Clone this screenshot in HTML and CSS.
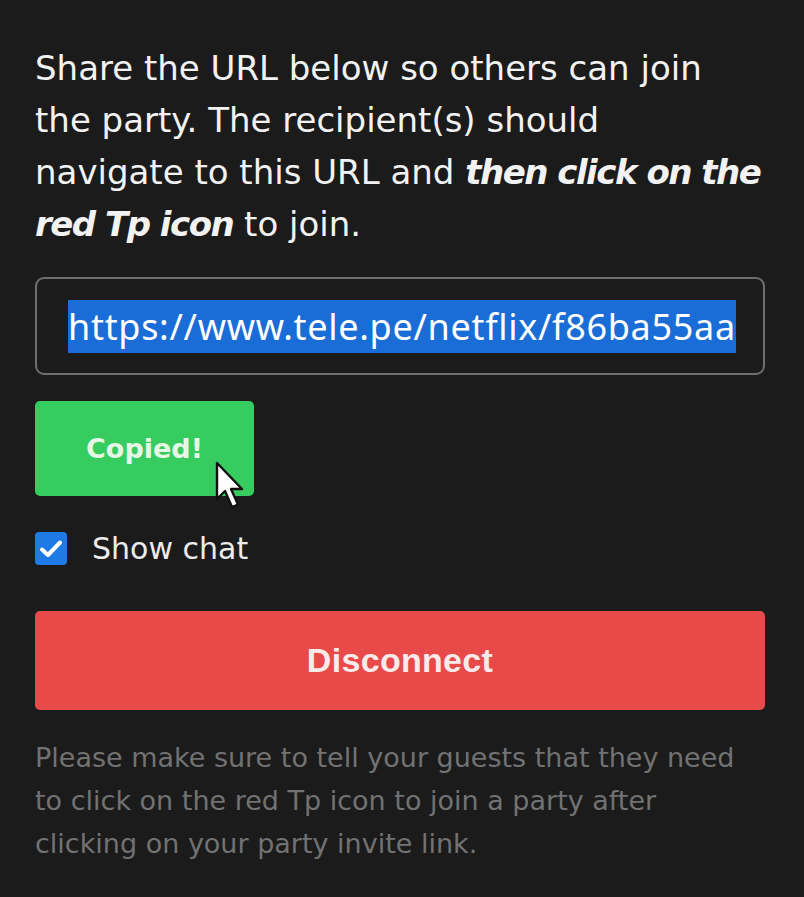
FILE: index.html
```html
<!DOCTYPE html>
<html lang="en">
<head>
    <meta charset="UTF-8">
    <title>Share Party</title>
    <link rel="stylesheet" href="styles.css">
</head>
<body>
    <div class="panel">
        <p class="intro">Share the URL below so others can join<br>the party. The recipient(s) should<br>navigate to this URL and <b><i>then click on the<br>red Tp icon</i></b> to join.</p>

        <div class="url-box">
            <span class="url-text">https://www.tele.pe/netflix/f86ba55aa</span>
        </div>

        <div class="copy-row">
            <button class="btn-copy">Copied!</button>
            <svg class="cursor" width="30" height="52" viewBox="0 0 15 26">
                <path d="M1 1 L1 19 L5 15 L8.5 23 L11.5 21.8 L8 14 L13.5 14 Z" fill="#fff" stroke="#111" stroke-width="1.2" stroke-linejoin="round"/>
            </svg>
        </div>

        <label class="chat-toggle">
            <span class="checkbox">
                <svg width="24" height="20" viewBox="0 0 24 20"><path d="M3 10.5 L9 16 L21 3.5" fill="none" stroke="#fff" stroke-width="4" stroke-linecap="round" stroke-linejoin="round"/></svg>
            </span>
            Show chat
        </label>

        <button class="btn-disconnect">Disconnect</button>

        <p class="note">Please make sure to tell your guests that they need<br>to click on the red Tp icon to join a party after<br>clicking on your party invite link.</p>
    </div>
</body>
</html>
```

FILE: styles.css
```css
body {
    margin: 0;
    background: #1b1b1b;
    font-family: 'DejaVu Sans', 'Noto Sans', sans-serif;
}
.panel {
    width: 730px;
    padding: 42px 35px 0;
}
.intro {
    margin: 0;
    font-size: 34px;
    line-height: 52px;
    color: #f2f2f2;
    white-space: nowrap;
}
.intro b {
    font-weight: bold;
    letter-spacing: -1.5px;
}

.url-box {
    margin-top: 27px;
    height: 94px;
    border: 2px solid #6e6e6e;
    border-radius: 9px;
    display: flex;
    align-items: center;
    padding-left: 31px;
}
.url-text {
    font-family: 'Noto Sans', sans-serif;
    font-size: 36px;
    line-height: 53px;
    color: #fff;
    background: #1a6dd6;
    letter-spacing: 0.7px;
}

.copy-row {
    margin-top: 26px;
    position: relative;
    height: 95px;
}
.btn-copy {
    width: 219px;
    height: 95px;
    border: none;
    border-radius: 5px;
    background: #36cc5f;
    color: #e6f7e6;
    font-family: 'DejaVu Sans', sans-serif;
    font-size: 27px;
    font-weight: bold;
}
.cursor {
    position: absolute;
    left: 180px;
    top: 60px;
}

.chat-toggle {
    margin-top: 35px;
    display: flex;
    align-items: center;
    gap: 25px;
    font-size: 30px;
    color: #ececec;
}
.checkbox {
    width: 32px;
    height: 33px;
    border-radius: 4px;
    background: #1e7be6;
    display: flex;
    align-items: center;
    justify-content: center;
}

.btn-disconnect {
    display: block;
    margin-top: 45px;
    width: 730px;
    height: 99px;
    border: none;
    border-radius: 5px;
    background: #e84a4a;
    color: #fbeaea;
    font-family: 'Liberation Sans', sans-serif;
    font-size: 34px;
    font-weight: bold;
    letter-spacing: 0.3px;
}

.note {
    margin: 26px 0 0;
    font-size: 27px;
    line-height: 43px;
    color: #727272;
}
```
